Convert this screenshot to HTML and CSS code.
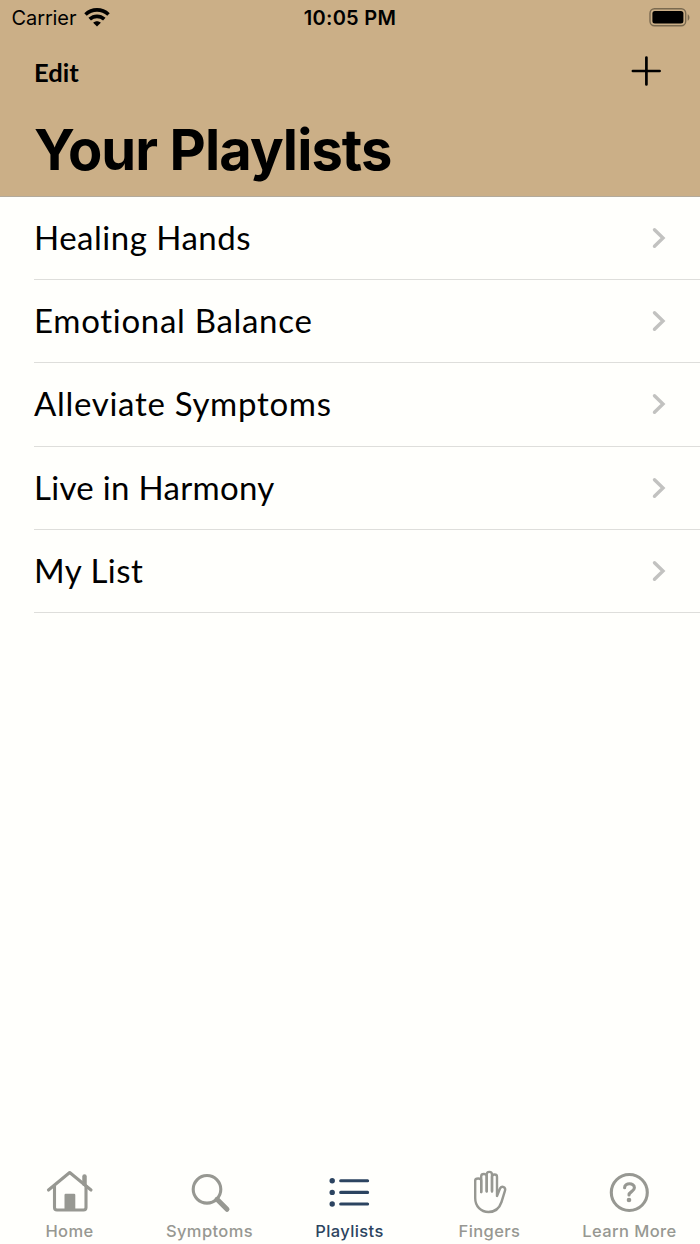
FILE: index.html
```html
<!DOCTYPE html>
<html lang="en">
<head>
    <meta charset="UTF-8">
    <meta name="viewport" content="width=device-width, initial-scale=1.0">
    <title>Your Playlists</title>
    <link rel="stylesheet" href="styles.css">
</head>
<body>
    <header class="header">
        <div class="status-bar">
            <div class="carrier">
                <span>Carrier</span>
                <svg width="26" height="20" viewBox="0 0 26 20" fill="none" stroke="#000" stroke-width="3.7">
                    <path d="M1.5 6.5C8.2 .4 17.8 .4 24.5 6.5"/>
                    <path d="M5.7 11.2C10 7.3 16 7.3 20.3 11.2"/>
                    <path d="M9.2 14.8C11.3 12.8 14.7 12.8 16.8 14.8L13 18.6Z" fill="#000" stroke="none"/>
                </svg>
            </div>
            <span class="time">10:05 PM</span>
            <svg class="battery" width="42" height="20" viewBox="0 0 42 20">
                <rect x="1" y="0.7" width="35.7" height="17" rx="4.5" fill="none" stroke="#7a6a50" stroke-width="1.4"/>
                <rect x="3.4" y="3" width="31" height="12.4" rx="2.5"/>
                <path d="M38.7 6.3C41 7.6 41 11.5 38.7 12.8Z" fill="#7a6a50"/>
            </svg>
        </div>
        <div class="nav-bar">
            <span class="edit">Edit</span>
            <svg width="30" height="30" viewBox="0 0 30 30" stroke="#000" stroke-width="2.7" stroke-linecap="round">
                <path d="M15.4 1.5V28.5M1.9 15H28.6"/>
            </svg>
        </div>
        <h1 class="title">Your Playlists</h1>
    </header>

    <ul class="playlists">
        <li><span>Healing Hands</span><svg class="chevron" viewBox="0 0 14 22"><path d="M2.5 2.7L11 11L2.5 19.3"/></svg></li>
        <li><span class="wide">Emotional Balance</span><svg class="chevron" viewBox="0 0 14 22"><path d="M2.5 2.7L11 11L2.5 19.3"/></svg></li>
        <li><span class="wide">Alleviate Symptoms</span><svg class="chevron" viewBox="0 0 14 22"><path d="M2.5 2.7L11 11L2.5 19.3"/></svg></li>
        <li><span class="narrow">Live in Harmony</span><svg class="chevron" viewBox="0 0 14 22"><path d="M2.5 2.7L11 11L2.5 19.3"/></svg></li>
        <li><span>My List</span><svg class="chevron" viewBox="0 0 14 22"><path d="M2.5 2.7L11 11L2.5 19.3"/></svg></li>
    </ul>

    <nav class="tabs">
        <div class="tab">
            <svg class="icon" viewBox="0 0 48 48">
                <path d="M2.5 23L23.7 5.5L45 23"/>
                <path d="M8.5 19V40.5Q8.5 43 11 43H37.5Q40 43 40 40.5V19"/>
                <path d="M38.5 9.5V17" stroke-width="4.5"/>
                <path d="M18.5 42.5V28Q18.5 26.8 19.7 26.8H28Q29.3 26.8 29.3 28V42.5Z" fill="currentColor" stroke="none"/>
            </svg>
            <span>Home</span>
        </div>
        <div class="tab">
            <svg class="icon" viewBox="0 0 48 48">
                <circle cx="21" cy="22.3" r="13.8"/>
                <path d="M31 32.3L41 42.3" stroke-width="5"/>
            </svg>
            <span>Symptoms</span>
        </div>
        <div class="tab active">
            <svg class="icon" viewBox="0 0 48 48">
                <path d="M14.7 13.7H41.6M14.7 25.4H41.6M14.7 37H41.6"/>
                <g fill="currentColor" stroke="none">
                    <circle cx="6.2" cy="13.7" r="2.7"/>
                    <circle cx="6.2" cy="25.4" r="2.7"/>
                    <circle cx="6.2" cy="37" r="2.7"/>
                </g>
            </svg>
            <span>Playlists</span>
        </div>
        <div class="tab">
            <svg class="icon hand" viewBox="0 0 48 48">
                <path d="M15.2 25V13.5C15.2 10.8 9.2 10.8 9.2 13.5V31C9.2 39.5 15 45 22.5 45C29.5 45 33.5 41 35.5 35L39 23.7C40 20 36 18.5 34 21.5L31 29V9.7C31 6.7 26 6.7 26 9.7V24.5"/>
                <path d="M15.2 25V9.3C15.2 6.3 20.7 6.3 20.7 9.3V24.5"/>
                <path d="M20.7 24V7.5C20.7 4 26 4 26 7.5V24"/>
            </svg>
            <span>Fingers</span>
        </div>
        <div class="tab">
            <svg class="icon" viewBox="0 0 48 48">
                <circle cx="23.3" cy="25.5" r="18"/>
                <path d="M18.6 20.8C18.6 15.4 28.4 15.4 28.4 20.7C28.4 24.6 23 24.6 23 28"/>
                <circle cx="23" cy="33" r="2.3" fill="currentColor" stroke="none"/>
            </svg>
            <span>Learn More</span>
        </div>
    </nav>
</body>
</html>
```
FILE: styles.css
```css
* {
    box-sizing: border-box;
}
body {
    display: flex;
    flex-direction: column;
    height: 1244px;
    margin: 0;
    background-color: #fffffc;
    color: #000;
    font-family: Inter, sans-serif;
}
svg {
    display: block;
    flex: none;
}
.header {
    height: 197px;
    background-color: #cbaf87;
    border-bottom: 1px solid #b3aa9b;
}
.status-bar {
    display: grid;
    grid-template-columns: 1fr auto 1fr;
    align-items: center;
    height: 36px;
    padding: 0 9px 0 12px;
    font-size: 20px;
}
.carrier {
    display: flex;
    align-items: center;
    gap: 8px;
    margin-left: -0.5px;
    letter-spacing: -0.1px;
}
.time {
    margin-right: 3px;
    font-weight: 600;
    letter-spacing: 0.3px;
}
.battery {
    justify-self: end;
}
.nav-bar {
    display: flex;
    align-items: center;
    justify-content: space-between;
    height: 70px;
    padding: 0 39px 0 34px;
}
.edit {
    padding-top: 1px;
    font-family: Lato, sans-serif;
    font-size: 25.5px;
    font-weight: 700;
}
.title {
    margin: 0;
    padding-left: 34px;
    font-size: 56px;
    font-weight: 700;
    letter-spacing: -0.9px;
    line-height: 88px;
}
.playlists {
    margin: 0;
    padding: 0 0 0 34px;
    list-style: none;
}
.playlists li {
    display: flex;
    align-items: center;
    justify-content: space-between;
    height: 83.2px;
    padding-right: 34px;
    border-bottom: 1px solid #dededb;
    font-family: Lato, sans-serif;
    font-size: 33px;
    letter-spacing: 0.5px;
}
.playlists span {
    padding-bottom: 2px;
}
.playlists .wide {
    letter-spacing: 0.7px;
}
.playlists .narrow {
    letter-spacing: 0.3px;
}
.chevron {
    width: 14px;
    height: 22px;
    fill: none;
    stroke: #c2c2c0;
    stroke-width: 3.4;
    stroke-linecap: round;
}
.tabs {
    display: grid;
    grid-template-columns: repeat(5, 1fr);
    margin-top: auto;
    height: 77px;
}
.tab {
    display: flex;
    flex-direction: column;
    align-items: center;
    color: #979892;
    font-size: 16.5px;
    font-weight: 500;
    letter-spacing: 0.4px;
}
.tab span {
    margin-right: 1px;
    line-height: 32px;
}
.active {
    color: #2c4460;
}
.icon {
    width: 48px;
    height: 48px;
    fill: none;
    stroke: currentColor;
    stroke-width: 3.1;
    stroke-linecap: round;
    stroke-linejoin: round;
}
.hand {
    stroke-width: 2.4;
}
```
